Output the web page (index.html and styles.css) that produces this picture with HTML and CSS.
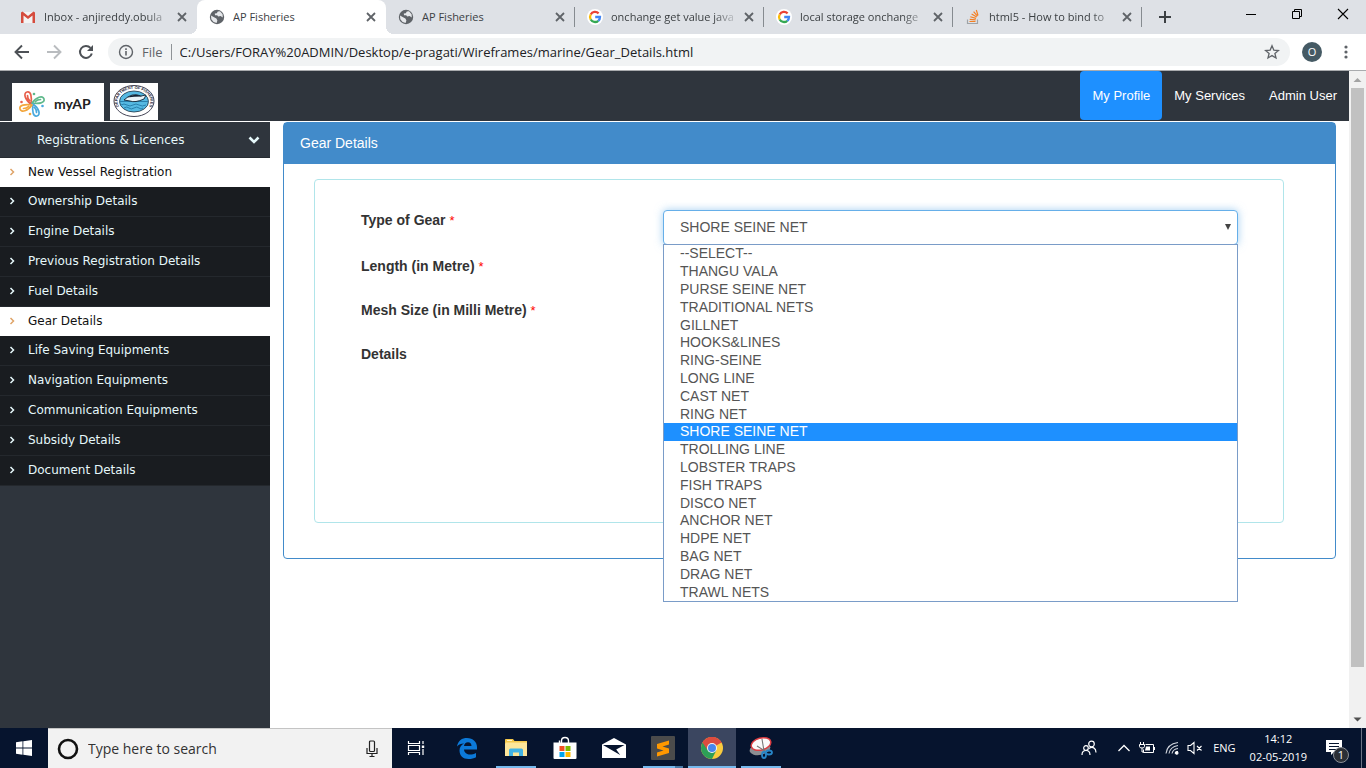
FILE: index.html
```html
<!DOCTYPE html>
<html lang="en">
<head>
<meta charset="utf-8">
<title>AP Fisheries</title>
<link rel="stylesheet" href="styles.css">
</head>
<body>
<svg class="defs" width="0" height="0" aria-hidden="true">
  <symbol id="globe" viewBox="0 0 16 16"><circle cx="8" cy="8" r="7.2" fill="#5f6368"/><path d="M8.8 2.6 11 2.300 13.600 5.200 13.800 8.500 11.500 7 9.200 7.600 8.200 6.200 6 6.300 5.800 4.600 7.800 4.300ZM2 6.400 4.600 8 7.400 9.500 8.400 11.500 7.600 13.900 4.600 13 2.300 10.300Z" fill="#e6e8eb"/></symbol>
  <symbol id="google" viewBox="0 0 16 16"><circle cx="8" cy="8" r="8" fill="#fff"/><g fill="none" stroke-width="2.300"><path d="M11.600 4.400A5 5 0 0 0 3.700 5.500" stroke="#ea4335"/><path d="M3.700 5.500A5 5 0 0 0 3.700 10.500" stroke="#fbbc05"/><path d="M3.700 10.500A5 5 0 0 0 11.300 11.800" stroke="#34a853"/><path d="M11.300 11.800A5 5 0 0 0 13 8H8.200" stroke="#4285f4"/></g></symbol>
  <symbol id="close" viewBox="0 0 16 16"><path d="M4 4l8 8M12 4l-8 8" stroke="#5f6368" stroke-width="1.800"/></symbol>
  <symbol id="angle" viewBox="0 0 6 8"><path d="M1.500 1 4.500 4 1.500 7" fill="none" stroke="currentColor" stroke-width="1.500"/></symbol>
</svg>

<header class="browser">
  <div class="tabstrip">
    <div class="tab"><svg class="fav" viewBox="0 0 16 16"><path d="M2 3h12v11H2z" fill="#f3f3f3"/><path d="M1 3.500V14h2.500V6.500L8 10l4.500-3.500V14H15V3.500L13.500 2.500 8 7 2.500 2.500Z" fill="#d54b3d"/></svg><span class="title fade">Inbox - anjireddy.obula</span><button class="x" aria-label="Close tab"><svg><use href="#close"/></svg></button></div>
    <div class="tab active"><svg class="fav"><use href="#globe"/></svg><span class="title">AP Fisheries</span><button class="x" aria-label="Close tab"><svg><use href="#close"/></svg></button></div>
    <div class="tab sep"><svg class="fav"><use href="#globe"/></svg><span class="title">AP Fisheries</span><button class="x" aria-label="Close tab"><svg><use href="#close"/></svg></button></div>
    <div class="tab sep"><svg class="fav"><use href="#google"/></svg><span class="title fade">onchange get value java</span><button class="x" aria-label="Close tab"><svg><use href="#close"/></svg></button></div>
    <div class="tab sep"><svg class="fav"><use href="#google"/></svg><span class="title fade">local storage onchange</span><button class="x" aria-label="Close tab"><svg><use href="#close"/></svg></button></div>
    <div class="tab sep"><svg class="fav" viewBox="0 0 16 16" fill="none"><path d="M2.500 10.500v4h10v-4" stroke="#9fa3a7" stroke-width="1.200"/><path d="M4.500 12.500h6M4.700 10.300l6 .6M5.300 7.700l5.700 1.700M6.600 5l5.100 3M8.600 2.700l3.900 4.500M11.300 1l1.700 5.500" stroke="#f48024" stroke-width="1.200"/></svg><span class="title fade">html5 - How to bind to</span><button class="x" aria-label="Close tab"><svg><use href="#close"/></svg></button></div>
    <button class="newtab" aria-label="New tab"><svg viewBox="0 0 14 14"><path d="M7 1v12M1 7h12" stroke="#3c4043" stroke-width="2"/></svg></button>
    <div class="winbtns">
      <button aria-label="Minimize"><svg viewBox="0 0 12 12"><path d="M1 6.500h10" stroke="#000"/></svg></button>
      <button aria-label="Restore"><svg viewBox="0 0 12 12" fill="none" stroke="#000"><path d="M1.500 3.500h7v7h-7zM3.500 3.500v-2h7v7h-2"/></svg></button>
      <button aria-label="Close"><svg viewBox="0 0 12 12"><path d="M1 1l10 10M11 1 1 11" stroke="#000" stroke-width="1.100"/></svg></button>
    </div>
  </div>
  <div class="toolbar">
    <button aria-label="Back"><svg viewBox="0 0 16 16" fill="none" stroke="#4d5156" stroke-width="1.900"><path d="M15 8H2M8 1.500 1.500 8 8 14.500"/></svg></button>
    <button aria-label="Forward"><svg viewBox="0 0 16 16" fill="none" stroke="#b9bcbf" stroke-width="1.900"><path d="M1 8h13M8 1.500 14.500 8 8 14.500"/></svg></button>
    <button aria-label="Reload"><svg viewBox="0 0 16 16"><path d="M13.800 9.500A6 6 0 1 1 12.500 3.900" fill="none" stroke="#4d5156" stroke-width="2"/><path d="M15 1v6H9z" fill="#4d5156"/></svg></button>
    <div class="omnibox">
      <svg class="info" viewBox="0 0 16 16"><circle cx="8" cy="8" r="6.500" fill="none" stroke="#5f6368" stroke-width="1.400"/><path d="M8 7v4.500M8 4.300v1.600" stroke="#5f6368" stroke-width="1.600"/></svg>
      <span class="scheme">File</span>
      <input class="url" aria-label="Address" value="C:/Users/FORAY%20ADMIN/Desktop/e-pragati/Wireframes/marine/Gear_Details.html">
      <button class="star" aria-label="Bookmark"><svg viewBox="0 0 16 16"><path d="M8 1.800 9.800 6.100 14.500 6.500 10.900 9.500 12 14 8 11.600 4 14 5.100 9.500 1.500 6.500 6.200 6.100Z" fill="none" stroke="#5f6368" stroke-width="1.300"/></svg></button>
    </div>
    <button class="avatar" aria-label="Profile">O</button>
    <button class="dots" aria-label="Menu"><svg viewBox="0 0 16 16" fill="#5f6368"><circle cx="8" cy="3" r="1.600"/><circle cx="8" cy="8" r="1.600"/><circle cx="8" cy="13" r="1.600"/></svg></button>
  </div>
</header>

<div class="viewport">
  <div class="page">
    <div class="topbar">
      <a class="logo" href="#"><svg viewBox="0 0 28 28" width="28" height="28" fill="none" stroke-width="1.700" stroke-linecap="round">
        <g stroke="#e8604c"><path d="M13 14C7 10 5 3 9 2s5 5 4 12M9.500 5.500c0 2 1 4 2 5"/></g>
        <g stroke="#5fb98b"><path d="M14 13c4-6 11-8 12-4s-5 5-12 4M22.500 9.500c-2 0-4 1-5 2"/></g>
        <g stroke="#4aa9dd"><path d="M15 14c6 4 8 11 4 12s-5-5-4-12M18.500 22.500c0-2-1-4-2-5"/></g>
        <g stroke="#f3a63c"><path d="M14 15c-4 6-11 8-12 4s5-5 12-4M5.500 18.500c2 0 4-1 5-2"/></g>
        <g stroke="none"><circle cx="3.500" cy="12" r="1.300" fill="#e8604c"/><circle cx="16" cy="4" r="1.300" fill="#5fb98b"/><circle cx="24.500" cy="16" r="1.300" fill="#4aa9dd"/><circle cx="12" cy="24" r="1.300" fill="#f3a63c"/></g>
      </svg><span>myAP</span></a>
      <a class="seal" href="#" aria-label="Department of Fisheries"><svg viewBox="0 0 48 37" width="48" height="37">
        <ellipse cx="24" cy="18" rx="20" ry="15.500" fill="#fff" stroke="#445" stroke-width="1"/>
        <path id="arc" d="M11 26A16.500 12.500 0 1 1 37 26" fill="none"/>
        <text font-family="Liberation Sans" font-size="4" font-weight="bold" fill="#223"><textPath href="#arc" startOffset="50%" text-anchor="middle">DEPARTMENT OF FISHERIES</textPath></text>
        <ellipse cx="24" cy="18.500" rx="14.500" ry="10.500" fill="#55b9e2" stroke="#234" stroke-width=".8"/>
        <path d="M10 18.500h28M11 22q3-2 6 0t6 0 6 0 7 0M14 25q3-2 5 0t5 0 5 0 4 0" fill="none" stroke="#247ba8" stroke-width=".9"/>
        <path d="M14 17q8-8 17-4l5-1-2 4q-9 4-14 2z" fill="#e9f4f8" stroke="#123" stroke-width=".9"/><path d="M17 14.500q8-5 15-1-8 0-15 1z" fill="#123"/>
      </svg></a>
      <nav class="topnav"><a class="current" href="#">My Profile</a><a href="#">My Services</a><a href="#">Admin User</a></nav>
    </div>
    <div class="columns">
      <aside class="sidebar">
        <button class="menu-head"><span>Registrations &amp; Licences</span><svg viewBox="0 0 12 8"><path d="M1.500 1.500 6 6l4.500-4.500" fill="none" stroke="currentColor" stroke-width="2.600"/></svg></button>
        <nav class="menu">
          <a class="on" href="#"><svg><use href="#angle"/></svg>New Vessel Registration</a>
          <a href="#"><svg><use href="#angle"/></svg>Ownership Details</a>
          <a href="#"><svg><use href="#angle"/></svg>Engine Details</a>
          <a href="#"><svg><use href="#angle"/></svg>Previous Registration Details</a>
          <a href="#"><svg><use href="#angle"/></svg>Fuel Details</a>
          <a class="on" href="#"><svg><use href="#angle"/></svg>Gear Details</a>
          <a href="#"><svg><use href="#angle"/></svg>Life Saving Equipments</a>
          <a href="#"><svg><use href="#angle"/></svg>Navigation Equipments</a>
          <a href="#"><svg><use href="#angle"/></svg>Communication Equipments</a>
          <a href="#"><svg><use href="#angle"/></svg>Subsidy Details</a>
          <a href="#"><svg><use href="#angle"/></svg>Document Details</a>
        </nav>
      </aside>
      <main class="content">
        <section class="panel">
          <h1>Gear Details</h1>
          <form class="gear">
            <label for="type">Type of Gear <i>*</i></label>
            <div class="combo">
              <select id="type"><option>SHORE SEINE NET</option></select>
              <ul class="options" role="listbox" aria-label="Type of Gear">
                <li role="option">--SELECT--</li><li role="option">THANGU VALA</li><li role="option">PURSE SEINE NET</li><li role="option">TRADITIONAL NETS</li><li role="option">GILLNET</li><li role="option">HOOKS&amp;LINES</li><li role="option">RING-SEINE</li><li role="option">LONG LINE</li><li role="option">CAST NET</li><li role="option">RING NET</li><li role="option" class="picked" aria-selected="true">SHORE SEINE NET</li><li role="option">TROLLING LINE</li><li role="option">LOBSTER TRAPS</li><li role="option">FISH TRAPS</li><li role="option">DISCO NET</li><li role="option">ANCHOR NET</li><li role="option">HDPE NET</li><li role="option">BAG NET</li><li role="option">DRAG NET</li><li role="option">TRAWL NETS</li>
              </ul>
            </div>
            <label for="length">Length (in Metre) <i>*</i></label><input id="length" type="text">
            <label for="mesh">Mesh Size (in Milli Metre) <i>*</i></label><input id="mesh" type="text">
            <label for="details">Details</label><textarea id="details"></textarea>
          </form>
        </section>
      </main>
    </div>
  </div>
  <div class="scrollbar"><svg viewBox="0 0 17 17"><path d="M4.500 11h8l-4-4z" fill="#a3a3a3"/></svg><div class="track"><div class="thumb"></div></div><svg viewBox="0 0 17 17"><path d="M4.500 6.500h8l-4 4z" fill="#505050"/></svg></div>
</div>

<footer class="taskbar">
  <button class="start" aria-label="Start"><svg viewBox="0 0 16 16" width="16" height="16" fill="#fff"><path d="M0 2.200 6.500 1.300V7.600H0zM7.300 1.200 16 0V7.600H7.300zM0 8.400H6.500V14.700L0 13.800zM7.300 8.400H16V16L7.300 14.800z"/></svg></button>
  <div class="search"><svg viewBox="0 0 22 22" width="22" height="22"><circle cx="11" cy="11" r="9" fill="none" stroke="#111" stroke-width="2.600"/></svg><input aria-label="Search" placeholder="Type here to search"><svg viewBox="0 0 12 18" width="12" height="18" fill="none" stroke="#222" stroke-width="1.200"><rect x="3.500" y="1" width="5" height="10.500" rx="1"/><path d="M1 8v5.500h10V8M6 13.500v3M3.500 16.500h5"/></svg></div>
  <div class="apps">
    <button aria-label="Task view"><svg viewBox="0 0 18 18" width="18" height="18" fill="none" stroke="#fff" stroke-width="1.200"><path d="M1.500 2v2.500h11V2M1.500 16v-2.500h11V16M1.500 6.500h11v5h-11zM16 2v3M16 10v6"/><path d="M14.800 6.500h2.400v2.500h-2.400z" fill="#fff" stroke="none"/></svg></button>
    <button aria-label="Edge"><svg viewBox="0 0 22 22" width="22" height="22"><path d="M1 9.500C2 3.500 6 1 11 1c6 0 10 4 10 9v2.500H8c.3 3.500 3 5 6 5 2 0 4-.5 6-1.600v4.300C18 21.300 15.500 22 12.500 22 7 22 3.500 18.500 3.500 13.500c0-3 1.500-5.500 4.500-7C5 6.500 2.500 7.600 1 9.500zM8 9h7.500c0-2.500-1.300-3.800-3.500-3.800S8.300 6.500 8 9z" fill="#0c79d8"/></svg></button>
    <button class="open" aria-label="File Explorer"><svg viewBox="0 0 22 20" width="22" height="20"><path d="M0 1.500Q0 1 1 1h7l1.500 2H22v15H0z" fill="#f4c84b"/><path d="M1 4.500h21V18H0V6z" fill="#fde69a"/><path d="M2 2h5v1H2z" fill="#fff4c8"/><path d="M4 18v-6q0-1.500 1.500-1.500h11Q18 10.500 18 12v6h-4v-3.500H8V18z" fill="#42b3e5"/></svg></button>
    <button aria-label="Store"><svg viewBox="0 0 24 24" width="24" height="24"><path d="M8.500 7V5q0-3.500 3.500-3.500T15.500 5v2M6.500 7V4.500" fill="none" stroke="#fff" stroke-width="1.400"/><path d="M.5 6.500h23V22q0 1-1 1h-21q-1 0-1-1z" fill="#fff"/><path d="M6.500 10h5v5h-5z" fill="#f25022"/><path d="M12.500 10h5v5h-5z" fill="#7fba00"/><path d="M6.500 16h5v5h-5z" fill="#00a4ef"/><path d="M12.500 16h5v5h-5z" fill="#ffb900"/></svg></button>
    <button aria-label="Mail"><svg viewBox="0 0 24 20" width="24" height="20"><path d="M0 6.500 12 0l12 6.500V20H0z" fill="#fff"/><path d="M1 7h21.500l-8.300 4.500 4 5.500z" fill="#06142e"/></svg></button>
    <button class="open more" aria-label="Sublime Text"><svg viewBox="0 0 24 24" width="24" height="24"><rect width="24" height="24" rx="1" fill="#4b4b4b"/><path d="M6 8 18 4.500v4l-6.500 2L18 12.500v4.500L6 20.500v-4l6.500-2L6 12.500z" fill="#ff9800"/></svg></button>
    <button class="open front" aria-label="Chrome"><svg viewBox="0 0 22 22" width="22" height="22"><circle cx="11" cy="11" r="11" fill="#f9cb3e"/><path d="M11 11 1.500 5.500A11 11 0 0 1 20.500 5.500z" fill="#dc4c3f"/><path d="M11 11 1.500 5.500A11 11 0 0 0 11 22L15.300 13.500z" fill="#2d9f57"/><path d="M11 6h9.800L20 4.800A11 11 0 0 0 1.500 5.500L6.500 13z" fill="#dc4c3f"/><circle cx="11" cy="11" r="5" fill="#f4f4f4"/><circle cx="11" cy="11" r="4" fill="#4886ec"/></svg></button>
    <button class="open" aria-label="Snipping Tool"><svg viewBox="0 0 24 24" width="24" height="24"><ellipse cx="11" cy="13" rx="10.500" ry="6" transform="rotate(-12 11 13)" fill="#8b8e92"/><ellipse cx="12" cy="8" rx="10" ry="6" transform="rotate(-15 12 8)" fill="#fafafa" stroke="#dc3d42" stroke-width="1.500"/><path d="m13 3 2 12M8 10l8 5" stroke="#777" stroke-width="1.100"/><g fill="none" stroke="#2785c7" stroke-width="1.800"><ellipse cx="15" cy="19" rx="2" ry="3"/><ellipse cx="20" cy="16.500" rx="3" ry="2"/></g></svg></button>
  </div>
  <div class="tray">
    <svg viewBox="0 0 16 16" width="16" height="16" fill="none" stroke="#fff" stroke-width="1.200"><circle cx="10.500" cy="4" r="2.800"/><circle cx="5" cy="8" r="2.300"/><path d="M1 15c0-3 1.700-4.500 4-4.500S9 12 9 15M8 8.500c3.500-2.500 7-.5 7 4"/></svg>
    <svg class="up" viewBox="0 0 14 14" width="14" height="14" fill="none" stroke="#fff" stroke-width="1.300"><path d="m1.500 10 5.500-5.500 5.500 5.500"/></svg>
    <svg class="power" viewBox="0 0 16 14" width="16" height="14" fill="none" stroke="#fff"><path d="M6.500 3.500h8v8h-10v-3M15.500 6v3M1.500 1v2M4.500 1v2M.5 3.500h5v2q0 1.500-2.500 1.500T.5 5.500zM3 7v4h2"/><path d="M7 5.500h4v4H6z" fill="#fff" stroke="none"/></svg>
    <svg viewBox="0 0 14 14" width="14" height="14" fill="none" stroke="#fff" stroke-width="1.100"><path d="M1 12.500Q2 3 13 1.500M4 12.500Q5 6 13 4.500M7 12.500q1-4.500 6-5" stroke="#cfd4dc"/><path d="M10 12.500q.5-2 3-2"/><circle cx="11.800" cy="12" r="1.200" fill="#fff"/></svg>
    <svg viewBox="0 0 16 14" width="16" height="14" fill="none" stroke="#fff" stroke-width="1.100"><path d="M1 4.500h2.500l3.500-3v11l-3.500-3H1zM10 5l4.500 4.500M14.500 5 10 9.500"/></svg>
    <span class="lang">ENG</span>
    <div class="clock"><span>14:12</span><span>02-05-2019</span></div>
    <button class="notes" aria-label="Notifications"><svg viewBox="0 0 16 16" width="16" height="16"><path d="M0 0h16v12H8l-3 3v-3H0z" fill="#fff"/><path d="M3 3.500h10M3 6.500h10M3 9.500h7" stroke="#06142e"/></svg><b>1</b></button>
  </div>
</footer>
</body>
</html>
```
FILE: styles.css
```css
* { box-sizing: border-box; }
body { margin: 0; height: 100vh; display: flex; flex-direction: column; background: #fff; font: 14px/20px "Liberation Sans", Arial, sans-serif; color: #333; overflow: hidden; }
button { border: 0; padding: 0; margin: 0; background: none; font: inherit; color: inherit; display: flex; align-items: center; justify-content: center; }
a { text-decoration: none; color: inherit; }
svg { display: block; flex: none; }
.defs { position: absolute; }

/* Browser frame */
.browser { flex: none; font-family: "Open Sans", "Noto Sans", sans-serif; border-bottom: 1px solid #a9abae; }
.tabstrip { display: flex; height: 34px; background: #dee1e6; padding-left: 8px; }
.tab { position: relative; flex: 0 1 189px; min-width: 0; display: flex; align-items: center; padding: 0 7px 0 12px; font-size: 11px; color: #3c4043; }
.tab.sep::after { content: ""; position: absolute; right: 0; top: 7px; width: 1px; height: 20px; background: #868b90; }
.tab.active { background: #fff; border-radius: 8px 8px 0 0; }
.tab.active::before, .tab.active::after { content: ""; position: absolute; bottom: 0; width: 8px; height: 8px; }
.tab.active::before { left: -8px; background: radial-gradient(circle at 0 0, transparent 8px, #fff 8px); }
.tab.active::after { right: -8px; background: radial-gradient(circle at 100% 0, transparent 8px, #fff 8px); }
.fav { width: 16px; height: 16px; margin-right: 8px; }
.title { flex: 1; min-width: 0; overflow: hidden; white-space: nowrap; margin-right: 2px; }
.fade { -webkit-mask-image: linear-gradient(90deg, #000 80%, transparent); mask-image: linear-gradient(90deg, #000 80%, transparent); }
.x, .x svg { width: 16px; height: 16px; }
.newtab { width: 46px; }
.newtab svg { width: 14px; height: 14px; }
.winbtns { display: flex; margin-left: auto; height: 28px; }
.winbtns button { width: 46px; }
.winbtns svg { width: 12px; height: 12px; }
.toolbar { display: flex; align-items: center; height: 36px; padding: 0 14px; gap: 16px; }
.toolbar > button svg { width: 16px; height: 16px; }
.omnibox { flex: 1; display: flex; align-items: center; height: 28px; margin-left: -2px; margin-right: -4px; padding: 0 10px; border-radius: 14px; background: #f1f3f4; font-size: 13px; }
.info { width: 16px; height: 16px; margin-right: 8px; }
.scheme { color: #5f6368; padding-right: 8px; border-right: 1px solid #8f9397; line-height: 16px; }
.url { flex: 1; min-width: 0; border: 0; padding: 0 8px; background: none; font: inherit; color: #202124; }
.star svg { width: 16px; height: 16px; }
.avatar { width: 20px; height: 20px; border-radius: 50%; background: #455a64; color: #fff; font-size: 11px; }
.dots { width: 16px; margin-right: -2px; }

/* Page */
.viewport { flex: 1; min-height: 0; display: flex; }
.page { flex: 1; min-width: 0; display: flex; flex-direction: column; }
.topbar { display: flex; height: 50px; background: #2f353d; padding-left: 12px; }
.logo { display: flex; align-items: center; gap: 8px; width: 92px; margin: 12px 6px 0 0; padding: 4px 0 0 6px; background: #fff; color: #222; font: bold 14px/20px Lato, sans-serif; }
.seal { align-self: flex-start; margin-top: 12px; background: #fff; }
.topnav { display: flex; margin-left: auto; color: #fff; font-size: 13px; }
.topnav a { display: flex; align-items: center; height: 49px; padding: 0 12px; border-radius: 4px; }
.topnav .current { background: #1e90ff; }
.columns { flex: 1; display: flex; padding-top: 1px; }
.sidebar { flex: none; width: 270px; background: #2f353d; color: #e6f8fb; font: 12px/18px "DejaVu Sans", Verdana, sans-serif; }
.menu-head { width: 100%; height: 36px; padding: 0 10px 0 37px; justify-content: space-between; border-bottom: 1px solid #262b31; }
.menu-head svg { width: 12px; height: 8px; }
.menu a { display: flex; align-items: center; height: 30px; padding: 0 0 1px 9px; gap: 13px; background: #191c20; border-bottom: 1px solid #24282d; }
.menu svg { width: 6px; height: 8px; }
.menu .on { height: 29px; background: #fff; color: #111; border-bottom: 0; }
.menu .on svg { color: #dfa468; }
.content { flex: 1; min-width: 0; padding: 0 13px; }
.panel { border: 1px solid #428bca; border-radius: 4px; min-height: 437px; }
.panel h1 { margin: 0; padding: 10px 16px; height: 41px; background: #428bca; color: #fff; font-size: 14px; line-height: 20px; font-weight: normal; }
.gear { display: grid; grid-template-columns: 302px 1fr; grid-template-rows: 36px 34px 34px 54px; row-gap: 10px; margin: 15px 51px 35px 30px; padding: 30px 45px 0 46px; min-height: 344px; border: 1px solid #b0e5ea; border-radius: 4px; }
.gear label { font-weight: bold; }
.gear i { color: #f00; font: 13px/18px "Liberation Sans", Arial, sans-serif; }
.gear input, .gear textarea { width: 100%; border: 1px solid #ccc; border-radius: 4px; resize: none; }
.combo { position: relative; }
.combo select { appearance: none; width: 100%; height: 35px; padding: 0 16px 2px; border: 1px solid #66afe9; border-radius: 4px; background: #fff; box-shadow: 0 0 8px rgba(102, 175, 233, .6); font: inherit; color: #555; }
.combo::after { content: ""; position: absolute; right: 7px; top: 14px; border: 3px solid transparent; border-top: 6px solid #444; border-bottom: 0; }
.options { position: absolute; z-index: 2; top: 34px; left: 0; right: 0; height: 358px; margin: 0; padding: 0; list-style: none; display: flex; flex-direction: column; background: #fff; border: 1px solid #7a9cc8; color: #555; }
.options li { flex: 1; display: flex; align-items: center; padding: 0 16px 1px; line-height: 16px; }
.options .picked { background: #1e90ff; color: #fff; }
.scrollbar { flex: none; width: 17px; display: flex; flex-direction: column; background: #f1f1f1; }
.scrollbar svg { width: 17px; height: 17px; }
.track { flex: 1; padding: 0 2px; }
.thumb { height: 93%; background: #c1c1c1; }

/* Taskbar */
.taskbar { flex: none; display: flex; height: 40px; background: #06142e; color: #fff; font-family: "Open Sans", "Noto Sans", sans-serif; }
.start { width: 48px; }
.search { width: 344px; display: flex; align-items: center; gap: 9px; padding: 0 14px 0 9px; background: #f2f2f2; border-top: 1px solid #c4c4c4; }
.search input { flex: 1; min-width: 0; border: 0; padding: 0; background: none; font: inherit; }
.search input::placeholder { color: #333; opacity: 1; }
.apps { display: flex; gap: 1px; }
.apps button { width: 48px; border-bottom: 2px solid transparent; border-top: 2px solid transparent; }
.apps button:first-child { margin-right: 2px; }
.apps .open { background: linear-gradient(#76b9ed, #76b9ed) 50% 100% / 40px 2px no-repeat border-box; }
.apps .more { background: linear-gradient(90deg, #76b9ed 32px, #4a7ba8 32px) 50% 100% / 40px 2px no-repeat border-box; }
.apps .front { background: #3b4660; border-bottom-color: #76b9ed; }
.tray { display: flex; align-items: center; gap: 8px; margin-left: auto; margin-right: 4px; padding-right: 19px; border-right: 1px solid #6b7385; font-size: 11px; }
.tray .up { margin-left: 12px; }
.tray .power { margin-right: 2px; }
.lang { margin-left: 2px; }
.clock { display: flex; flex-direction: column; align-items: center; margin: 0 11px 0 6px; line-height: 18px; }
.notes { position: relative; width: 16px; height: 16px; }
.notes b { position: absolute; left: 7px; top: 7px; width: 16px; height: 16px; border: 1px solid #8b8f96; border-radius: 50%; background: #2b2f36; font: 11px/14px "Open Sans", sans-serif; text-align: center; }
```
